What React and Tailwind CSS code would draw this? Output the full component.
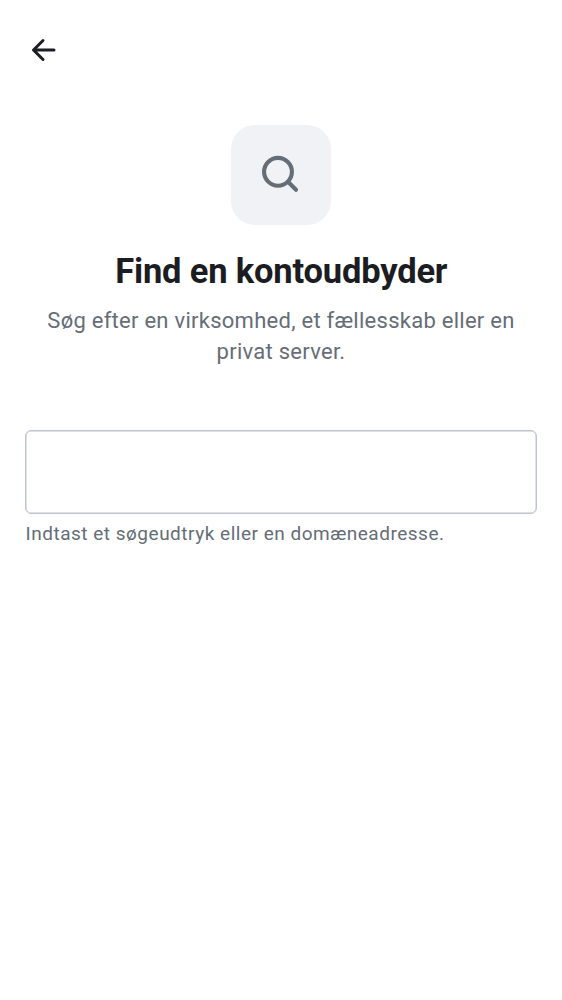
export default function App() {
  return (
    <main className="flex h-[1000px] w-full flex-col bg-white px-[25px] pt-[32px] font-['Roboto',sans-serif] text-[#1b1d22]">
      <button aria-label="Tilbage" className="flex size-9 items-center justify-center">
        <svg className="size-9" viewBox="0 0 36 36" fill="none" stroke="currentColor" strokeWidth="3" strokeLinecap="round" strokeLinejoin="round">
          <path d="M29 18H8.5M18 8.5L8.5 18L18 27.5" />
        </svg>
      </button>
      <header className="flex flex-col items-center pt-[57px] text-center">
        <div className="flex size-[100px] items-center justify-center rounded-[24px] bg-[#f0f2f5] text-[#656d77]">
          <svg className="size-[50px]" viewBox="0 0 50 50" fill="none" stroke="currentColor" strokeWidth="4.1" strokeLinecap="round">
            <circle cx="22" cy="21.8" r="13.9" />
            <path d="M32.2 32L40 39.8" />
          </svg>
        </div>
        <h1 className="mt-[24px] pl-[0.5px] text-[34.5px] leading-[44px] font-bold tracking-[-0.18px]">Find en kontoudbyder</h1>
        <p className="mt-[12px] text-[22px] leading-[31px] tracking-[0.265px] text-[#656d77]">
          Søg efter en virksomhed, et fællesskab eller en<br />privat server.
        </p>
      </header>
      <input aria-label="Kontoudbyder" className="mt-[63px] h-[84px] w-full rounded-[6px] border border-[#bfc4d1] px-5 text-[22px] shadow-[inset_0_0_0_0.5px_#bfc4d1] outline-none" />
      <p className="mt-[6px] pl-[0.5px] text-[19px] leading-[27px] tracking-[0.51px] text-[#656d77]">Indtast et søgeudtryk eller en domæneadresse.</p>
    </main>
  );
}
